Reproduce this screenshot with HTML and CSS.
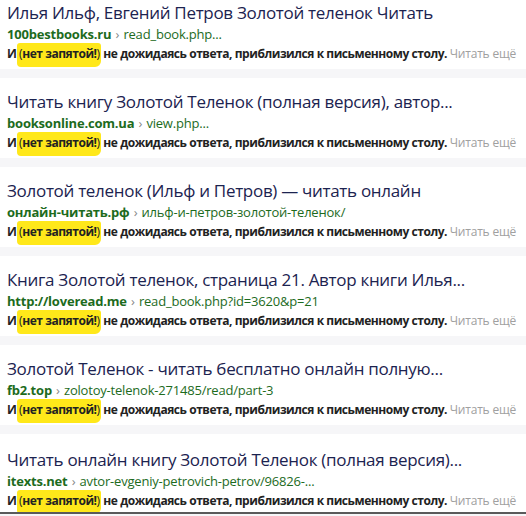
FILE: index.html
```html
<!DOCTYPE html>
<html lang="ru">
<head>
    <meta charset="UTF-8">
    <meta name="viewport" content="width=device-width, initial-scale=1.0">
    <title>Золотой теленок — результаты поиска</title>
    <link rel="stylesheet" href="styles.css">
</head>
<body>
    <div class="results">
        <div class="result first">
            <div class="title">Илья Ильф, Евгений Петров Золотой теленок Читать</div>
            <div class="path"><b>100bestbooks.ru</b> <span class="sep">›</span> read_book.php...</div>
            <div class="snippet">И <span class="mark"><i>(</i>нет запятой!<i>)</i></span> не дожидаясь ответа, приблизился к письменному столу. <span class="more">Читать ещё</span></div>
        </div>

        <div class="result">
            <div class="title">Читать книгу Золотой Теленок (полная версия), автор...</div>
            <div class="path"><b>booksonline.com.ua</b> <span class="sep">›</span> view.php...</div>
            <div class="snippet">И <span class="mark"><i>(</i>нет запятой!<i>)</i></span> не дожидаясь ответа, приблизился к письменному столу. <span class="more">Читать ещё</span></div>
        </div>

        <div class="result">
            <div class="title">Золотой теленок (Ильф и Петров) — читать онлайн</div>
            <div class="path"><b>онлайн-читать.рф</b> <span class="sep">›</span> ильф-и-петров-золотой-теленок/</div>
            <div class="snippet">И <span class="mark"><i>(</i>нет запятой!<i>)</i></span> не дожидаясь ответа, приблизился к письменному столу. <span class="more">Читать ещё</span></div>
        </div>

        <div class="result">
            <div class="title">Книга Золотой теленок, страница 21. Автор книги Илья...</div>
            <div class="path"><b>http://loveread.me</b> <span class="sep">›</span> read_book.php?id=3620&amp;p=21</div>
            <div class="snippet">И <span class="mark"><i>(</i>нет запятой!<i>)</i></span> не дожидаясь ответа, приблизился к письменному столу. <span class="more">Читать ещё</span></div>
        </div>

        <div class="result">
            <div class="title">Золотой Теленок - читать бесплатно онлайн полную...</div>
            <div class="path"><b>fb2.top</b> <span class="sep">›</span> zolotoy-telenok-271485/read/part-3</div>
            <div class="snippet">И <span class="mark"><i>(</i>нет запятой!<i>)</i></span> не дожидаясь ответа, приблизился к письменному столу. <span class="more">Читать ещё</span></div>
        </div>

        <div class="result last">
            <div class="title">Читать онлайн книгу Золотой Теленок (полная версия)...</div>
            <div class="path"><b>itexts.net</b> <span class="sep">›</span> avtor-evgeniy-petrovich-petrov/96826-...</div>
            <div class="snippet">И <span class="mark"><i>(</i>нет запятой!<i>)</i></span> не дожидаясь ответа, приблизился к письменному столу. <span class="more">Читать ещё</span></div>
        </div>
    </div>
</body>
</html>
```

FILE: styles.css
```css
:root {
    --page-bg: #f6f6f8;
    --card-bg: #ffffff;
    --title-color: #1c2350;
    --path-color: #1d6b1d;
    --text-color: #222222;
    --muted-color: #a0a0a0;
    --marker: #ffe81a;
}

* {
    margin: 0;
    padding: 0;
    box-sizing: border-box;
}

body {
    background-color: var(--page-bg);
    font-family: 'Open Sans', 'Noto Sans', sans-serif;
    color: var(--text-color);
    width: 526px;
    height: 516px;
    overflow: hidden;
}

.results {
    display: flex;
    flex-direction: column;
    gap: 9px;
    border-bottom: 2px solid #5a5a5a;
    height: 514px;
    overflow: hidden;
}

.result {
    flex-shrink: 0;
    background-color: var(--card-bg);
    padding: 13px 7px 5px;
}

.result.first {
    padding-top: 2px;
}

.result.last {
    padding-top: 15px;
}

.title {
    font-size: 17px;
    line-height: 22px;
    letter-spacing: -0.3px;
    color: var(--title-color);
    white-space: nowrap;
}

.path {
    font-size: 13px;
    line-height: 20px;
    letter-spacing: -0.2px;
    color: var(--path-color);
    white-space: nowrap;
}

.path b {
    font-weight: 700;
}

.path .sep {
    color: #888888;
    margin: 0 1px;
}

.snippet {
    font-size: 12px;
    line-height: 20px;
    font-weight: 700;
    letter-spacing: -0.45px;
    white-space: nowrap;
}

.mark {
    background-color: var(--marker);
    border-radius: 3px 3px 6px 4px;
    padding: 2px 1px 5px 2px;
    margin-left: -2px;
}

.mark i {
    font-style: normal;
    font-weight: 400;
}

.more {
    font-weight: 400;
    letter-spacing: -0.2px;
    color: var(--muted-color);
}
```
